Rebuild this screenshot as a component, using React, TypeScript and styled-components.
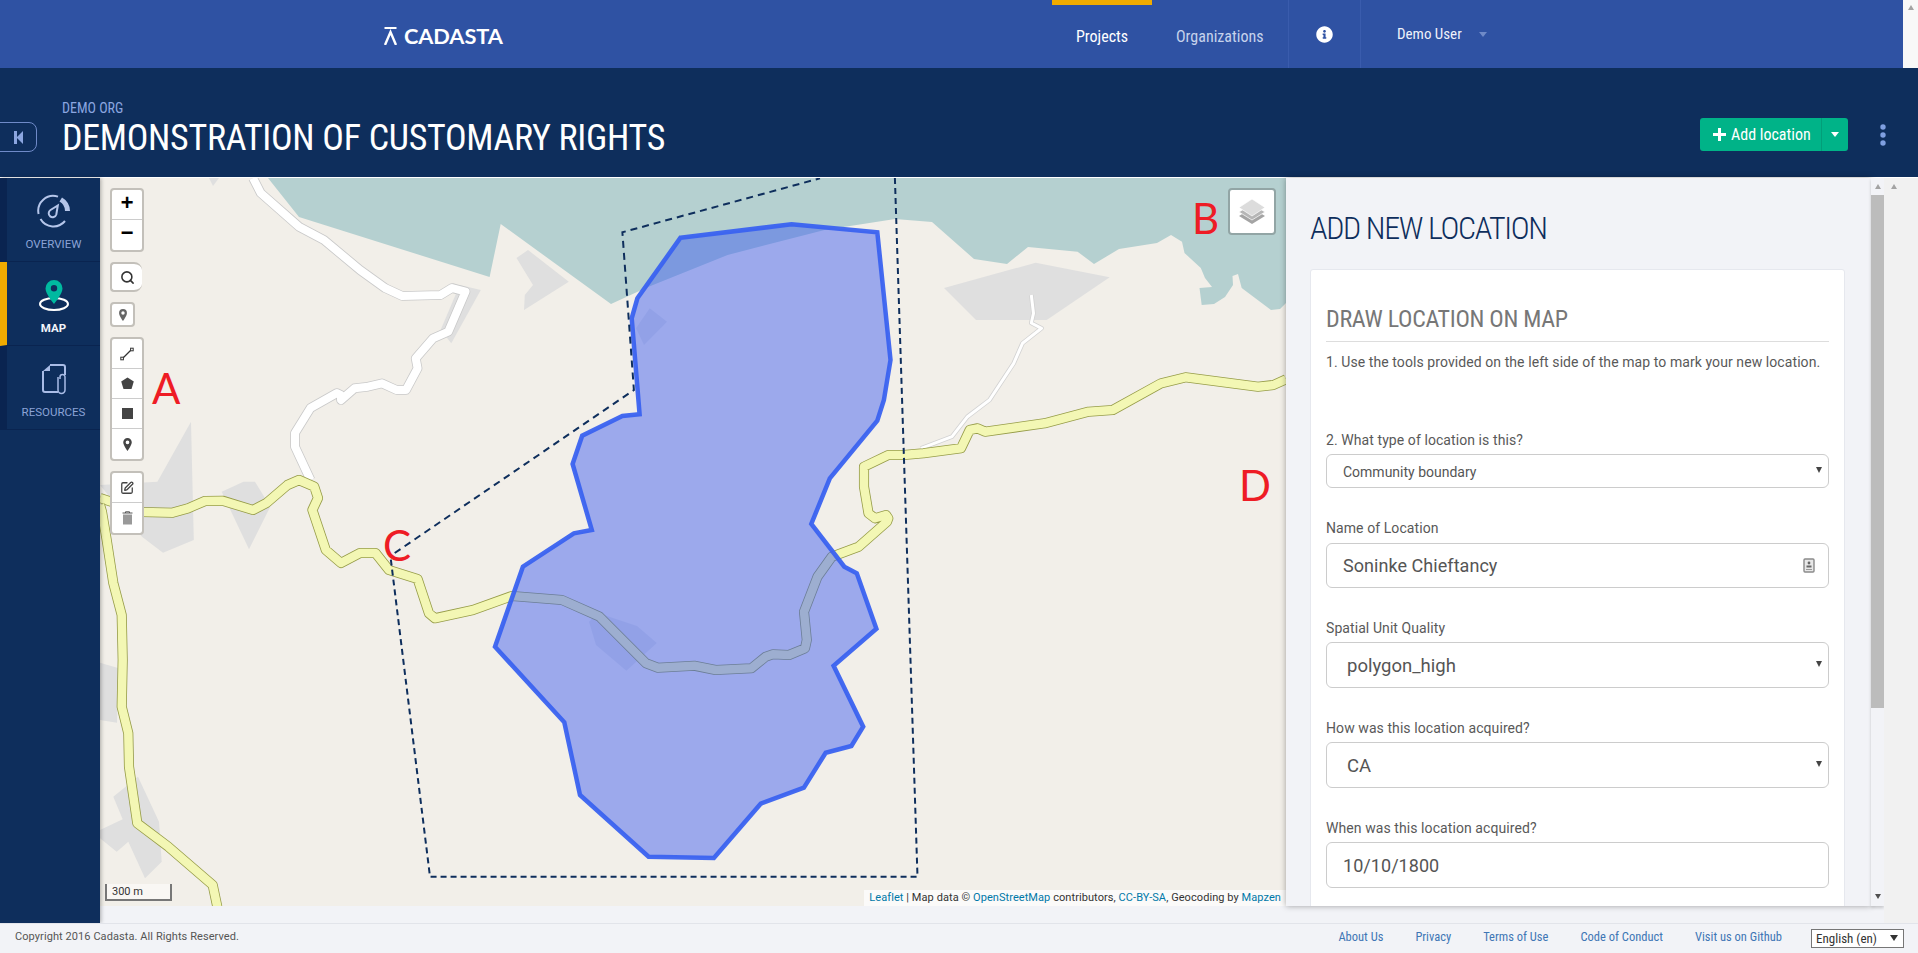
import React from 'react';
import styled, { createGlobalStyle } from 'styled-components';
import { FaInfoCircle } from 'react-icons/fa';
import { Search, SquarePen } from 'lucide-react';

const NAVY = '#0e2e5c';
const BLUE = '#2f52a3';

const Global = createGlobalStyle`
  html, body { margin: 0; padding: 0; height: 100%; overflow: hidden; background: #fff; }
  body { font-family: Roboto, "Liberation Sans", sans-serif; }
  * { box-sizing: border-box; }
`;

const Page = styled.div`
  width: 1918px; height: 953px; display: flex; flex-direction: column; overflow: hidden; background: #f2f3f7;
`;

const TopBar = styled.header`
  height: 68px; flex: none; margin-right: 15px; background: ${BLUE}; display: flex; padding-left: 384px;
  position: relative;
`;
const WindowArrow = styled.i<{ $down?: boolean }>`
  width: 0; height: 0; display: block; border-left: 3.5px solid transparent; border-right: 3.5px solid transparent;
  ${p => (p.$down ? 'border-top: 5px solid #505050;' : 'border-bottom: 5px solid #a3a3a3;')}
`;
const WindowScroll = styled.div`
  position: absolute; right: -15px; top: 0; width: 15px; height: 68px; background: #f8f8f8; display: flex; justify-content: center; padding-top: 5px;
`;
const Logo = styled.div`
  width: 668px; display: flex; align-items: center; gap: 7px; color: #fff; font: 700 21.8px Lato, sans-serif; letter-spacing: -0.1px; height: 71px;
`;
const NavItem = styled.a<{ $active?: boolean; $w: number }>`
  width: ${p => p.$w}px; padding: 0 0 0 24px; line-height: 74px; height: 68px; font-size: 16px; font-stretch: 75%;
  color: ${p => (p.$active ? '#fff' : '#c6d2ec')}; ${p => p.$active && 'box-shadow: inset 0 5px 0 #f0ab00;'}
`;
const InfoCell = styled.div`
  width: 73px; display: flex; align-items: center; justify-content: center; color: #fff; font-size: 17px;
  border-left: 1px solid #3a5cad; border-right: 1px solid #3a5cad;
`;
const UserCell = styled.div`
  padding: 26px 0 0 36px; display: flex; align-items: flex-start; gap: 17px; color: #eef1fa; font-size: 15px; font-stretch: 75%; line-height: 16px;
`;
const Caret = styled.i<{ $color: string }>`
  width: 0; height: 0; display: block; border-left: 4px solid transparent; border-right: 4px solid transparent;
  border-top: 5px solid ${p => p.$color};
`;
const UserCaret = styled(Caret)`
  margin-top: 6px;
`;

const SubHeader = styled.div`
  height: 110px; flex: none; background: ${NAVY}; border-bottom: 1px solid #fff; display: flex; position: relative;
`;
const BackButton = styled.div`
  width: 38px; height: 30px; margin: 54px 0 0 -1px; border: 1px solid #6f8ac8; border-radius: 0 8px 8px 0; display: flex; align-items: center; justify-content: center;
`;
const TitleBlock = styled.div`
  margin-left: 25px; padding-top: 32px;
`;
const Org = styled.div`
  color: #8ba6e0; font-size: 14px; line-height: 16px; font-stretch: 75%;
`;
const Title = styled.h1`
  margin: 2px 0 0; color: #fff; font-size: 36px; line-height: 40px; font-weight: 400; font-stretch: 75%; letter-spacing: -0.3px; white-space: nowrap;
`;
const Actions = styled.div`
  margin: 50px 0 0 auto; display: flex; align-items: flex-start;
`;
const AddButton = styled.div`
  display: flex; height: 33px; width: 148px; background: #00b388; border-radius: 3px; color: #fff; font-size: 16px; font-stretch: 75%;
`;
const AddMain = styled.div`
  width: 122px; display: flex; align-items: center; gap: 5px; padding-left: 13px; border-right: 1px solid #029e79;
`;
const AddCaret = styled.div`
  flex: 1; display: flex; align-items: center; justify-content: center;
`;
const Kebab = styled.div`
  width: 70px; height: 33px; display: flex; align-items: center; padding-left: 32px;
`;

const Body = styled.div`
  height: 745px; flex: none; display: flex;
`;
const Sidebar = styled.nav`
  width: 100px; flex: none; background: ${NAVY}; display: flex; flex-direction: column; position: relative; z-index: 3; box-shadow: 1px 0 4px rgba(0,0,0,.3);
`;
const SideItem = styled.div<{ $active?: boolean }>`
  height: 84px; border-left: 7px solid ${p => (p.$active ? '#f0ab00' : '#0a2450')}; border-bottom: 1px solid #0a2450;
  display: flex; flex-direction: column; align-items: center; padding-top: 16px;
  font-size: 11.500px; line-height: 14px; color: ${p => (p.$active ? '#f2f5fb' : '#8ba3d6')}; font-weight: ${p => (p.$active ? 700 : 400)};
`;
const SideIcon = styled.svg`
  width: 40px; height: 36px; margin-bottom: 7px;
`;

const Main = styled.div`
  flex: 1; display: flex; min-width: 0; height: 728px;
`;
const MapArea = styled.div`
  width: 1186px; flex: none; position: relative; background: #f2efe9; overflow: hidden;
`;
const MapSvg = styled.svg`
  position: absolute; inset: 0; width: 1186px; height: 728px; display: block;
`;
const Controls = styled.div`
  position: absolute; left: 10px; top: 10px; display: flex; flex-direction: column; align-items: flex-start; gap: 10px; z-index: 2;
`;
const ControlBox = styled.div<{ $w?: number }>`
  width: ${p => p.$w ?? 34}px; border: 2px solid #c3c0ba; border-radius: 4px; background: #fff; display: flex; flex-direction: column; background-clip: padding-box;
`;
const ControlBtn = styled.div<{ $h?: number; $last?: boolean }>`
  height: ${p => (p.$h ?? 30)}px; display: flex; align-items: center; justify-content: center; color: #000;
  border-bottom: ${p => (p.$last ? 'none' : '1px solid #ccc')};
  font: 700 22px/30px "Liberation Mono", monospace;
`;
const SearchBox = styled(ControlBox)`
  border-right: none; border-radius: 4px 8px 8px 4px; width: 32px;
`;
const LayersBox = styled.div`
  position: absolute; right: 10px; top: 10px; width: 48px; height: 47px; border: 2px solid #92a5a5; border-radius: 4px; background: #fff;
  display: flex; align-items: center; justify-content: center; z-index: 2;
`;
const Letter = styled.span<{ $x: number; $y: number }>`
  position: absolute; left: ${p => p.$x}px; top: ${p => p.$y}px; color: #ee1c25; font: 400 42px/42px Lato, sans-serif; z-index: 1;
`;
const Scale = styled.div`
  position: absolute; left: 5px; bottom: 5px; width: 67px; height: 17px; border: 2px solid #777; border-top: none; background: rgba(255,255,255,.5);
  font-size: 11px; line-height: 15px; padding-left: 5px; color: #333; z-index: 1;
`;
const Attribution = styled.div`
  position: absolute; right: 0; bottom: 0; height: 16px; background: rgba(255,255,255,.7); padding: 0 5px; font-size: 11px; letter-spacing: .07px; line-height: 16px; color: #333; white-space: nowrap;
  a { color: #0078a8; }
`;

const Panel = styled.aside`
  width: 585px; flex: none; height: 728px; overflow: hidden; padding: 30px 26px 0 24px; background: #f2f3f7; box-shadow: 0 0 6px rgba(0,0,0,.35); position: relative; z-index: 2;
`;
const PanelTitle = styled.h2`
  margin: 0 0 21px; font-size: 32px; line-height: 40px; font-weight: 300; color: ${NAVY}; font-stretch: 75%; letter-spacing: -1.35px;
`;
const Card = styled.div`
  background: #fff; border: 1px solid #e6e8ee; border-radius: 3px; padding: 34px 15px 0; height: 700px;
`;
const CardTitle = styled.h3`
  margin: 0; font-size: 24px; line-height: 31px; padding-bottom: 6px; font-weight: 400; color: #777; border-bottom: 1px solid #ddd; font-stretch: 75%; letter-spacing: -0.3px;
`;
const Para = styled.p`
  margin: 10px 0 0; font-size: 14px; line-height: 20px; color: #595959; letter-spacing: .08px;
`;
const Field = styled.div<{ $top?: number }>`
  margin-top: ${p => p.$top ?? 30}px; position: relative;
`;
const Label = styled.label<{ $gap?: number }>`
  display: block; font-size: 14px; line-height: 20px; height: 20px; margin-bottom: ${p => p.$gap ?? 4}px; color: #595959; letter-spacing: .08px;
`;
const controlCss = `
  display: block; width: 100%; border: 1px solid #ccc; border-radius: 6px; background: #fff; color: #555; outline: none; font-family: Roboto, sans-serif; appearance: none;
`;
const Select = styled.select<{ $h: number; $size: number; $pad: number }>`
  ${controlCss}
  height: ${p => p.$h}px; font-size: ${p => p.$size}px; padding-left: ${p => p.$pad}px; padding-top: 1px;
`;
const Input = styled.input<{ $h: number }>`
  ${controlCss}
  height: ${p => p.$h}px; font-size: 18px; padding-left: 16px; letter-spacing: .05px;
`;
const SelectArrow = styled.i`
  display: block; width: 0; height: 0; border-left: 3px solid transparent; border-right: 3px solid transparent; border-top: 6px solid #444; margin-top: -2px;
`;
const ArrowSlot = styled.div<{ $h: number }>`
  position: absolute; right: 0; bottom: 0; width: 20px; height: ${p => p.$h}px; display: flex; align-items: center; justify-content: center; pointer-events: none;
`;
const ContactIcon = styled.svg`
  position: absolute; right: 14px; bottom: 15px; width: 12px; height: 15px;
`;

const ScrollCol = styled.div`
  width: 13px; flex: none; height: 728px; display: flex; flex-direction: column; align-items: center; position: relative; z-index: 3; padding-top: 6px; background: #f2f3f7; box-shadow: 0 2px 3px rgba(0,0,0,.18);
`;
const Thumb = styled.div`
  width: 13px; height: 513px; margin-top: 6px; background: #bcbcbc; flex: none;
`;
const ArrowDownSlot = styled.div`
  margin-top: auto; padding-bottom: 7px;
`;
const OuterCol = styled.div`
  flex: 1; height: 745px; background: #f1f1f1; padding: 6px 0 0 7px; position: relative; z-index: 3;
`;

const Footer = styled.footer`
  height: 30px; flex: none; border-top: 1px solid #e2e4ea; background: #f2f3f7; display: flex; align-items: center; padding: 0 0 4px 15px; font-size: 11px; letter-spacing: .08px; color: #555; position: relative; z-index: 4;
`;
const FooterLinks = styled.div`
  margin-left: auto; display: flex; gap: 32px; color: #3f76b5; font-size: 12.500px; font-stretch: 75%; letter-spacing: 0;
`;
const LangWrap = styled.div`
  position: relative; margin: 4px 14px 0 29px;
`;
const LangSelect = styled.select`
  width: 93px; height: 19px; border: 1px solid #767676; border-radius: 0; background: #fff; appearance: none; font: 13px Roboto, sans-serif; font-stretch: 75%; padding-left: 4px; color: #333; display: block;
`;
const LangArrow = styled.i`
  position: absolute; right: 6px; top: 6px; width: 0; height: 0; border-left: 4px solid transparent; border-right: 4px solid transparent; border-top: 6px solid #333;
`;

const pts = (a: number[][]) => a.map(p => p.join(',')).join(' ');

const WATER = [[268,178],[299,217],[489.6,277],[500.7,224],[611,304],[648,287],[727.6,255],[824.5,230],[895,219],[932,222],[974,259],[1007,264],[1028,247],[1077.6,251.7],[1094,264],[1119,249],[1157,243],[1171,235],[1182,241.7],[1184.5,253],[1200.8,268],[1205,278],[1212,287],[1199.5,288],[1201.7,305],[1214,304],[1225,297],[1233,285],[1232.5,276],[1238,274],[1241.7,288],[1271,310],[1280,309],[1286,303],[1286,178]];
const BUILDINGS = [
  [[209,178],[213,186],[219,178]],
  [[528,250],[568.8,281.7],[524,310],[524.8,295],[533,285],[516.5,258]],
  [[459.7,285],[480.8,290],[451.3,343.3],[440.6,330]],
  [[191,421.7],[193.8,540],[163,552.7],[142,536.7],[100,485],[157.4,481.7]],
  [[243.5,481.7],[255,481.7],[270.3,506.7],[249,549.3],[221.7,491.7]],
  [[649.7,308.3],[667,321.7],[644,345],[636,328.3]],
  [[589,621.7],[598,613],[637,626],[656.8,643],[626.4,670.7],[596,645]],
  [[944,288],[1035.7,262.7],[1109.7,277.3],[1046.7,320],[976,320]],
  [[100,662.7],[118,668],[117,722.7],[100,720]],
  [[138,776.7],[159,821.7],[161.7,861.7],[145,878.3],[128.3,841.7],[116.7,851.7],[100,838.3],[100,830],[122.7,819.3],[113.3,796.7]],
];
const ROAD_MAIN = [[100,498],[142,512],[172.7,512.7],[188,508.3],[205,501],[222.5,500.7],[253,510],[266.5,503],[287.5,485],[299,480],[314.3,486.7],[318,498],[312.4,510],[325.8,550],[341,563],[360,553],[375.5,553],[389,570],[417.6,579],[429,613.3],[434.9,618.3],[473,610],[512,596],[562,600],[599.6,616.7],[646,663.3],[657.9,667.7],[694.3,665.7],[715.7,670],[751.4,668.3],[765.7,656.7],[772.9,654.3],[789,655],[805,648.3],[806.8,640],[804,611.7],[817.5,576.7],[831.8,556.7],[858.6,546.7],[887,521.7],[888.3,518.3],[886,515],[875,518.3],[868.5,513.3],[864,486.7],[864,466.7],[888.3,455],[903.7,455],[923.5,453.3],[961,448.3],[969.7,430],[977.6,428.3],[985,431.7],[1044.5,423.3],[1088.6,411.7],[1112.8,410],[1161,383.3],[1185.4,377.3],[1258,386.7],[1273.4,385],[1286,379.3]];
const ROAD_LEFT = [[100,505],[102,512],[106.7,540],[113.3,583],[121.7,615],[122.7,660],[121.7,706.7],[128.3,733.3],[129,766.7],[137.3,823.3],[168.3,846.7],[212.7,885],[217.3,906.7]];
const ROAD_WHITE = [[253,178],[260.7,193],[299,226.7],[324,240],[360,270],[385,288],[402.3,296],[440.6,295],[452,288],[465.5,291.7],[448.3,331.7],[433,338.3],[415.7,358.3],[417.6,368.3],[406,390],[396.6,390],[382,383.3],[368,386.7],[354.5,388.3],[341,400],[341,395],[337,393],[310.5,408],[295,433],[295,446.7],[310.5,480]];
const ROAD_THIN = [[1031.3,295],[1033.5,313.3],[1031.3,323],[1041.5,328.3],[1022.5,343.3],[1013.7,363.3],[989.5,400],[967.5,416.7],[952,436.7],[921,448.3]];
const POLYGON = [[680.5,237.7],[791.5,224.3],[877.3,232.3],[890.5,360],[883.9,400],[877.3,420.7],[829.8,478.3],[811.3,524],[844.3,566.7],[856.8,573.3],[876.4,628.7],[833.6,665.7],[863.2,726.7],[851.4,746],[825.7,752.7],[803.9,787.7],[760.7,803.7],[713.9,858],[648.6,856.7],[580,795],[564.3,722.3],[495,646.7],[522.9,566.7],[573.9,533.3],[591.8,530],[572.6,464],[582.2,435.7],[622.4,416],[639.6,414.3],[631.7,318.3],[637.4,298.3]];
const DASH_A = [[394.7,553],[633.9,390],[622.4,232.3],[820,178.3]];
const DASH_B = [[894.9,178],[917.5,876.7],[430,876.7],[390.7,558.3]];

const Road = ({ p, outer, inner, w }: { p: number[][]; outer: string; inner: string; w: number }) => (
  <>
    <polyline points={pts(p)} fill="none" stroke={outer} strokeWidth={w + 1.6} strokeLinejoin="round" />
    <polyline points={pts(p)} fill="none" stroke={inner} strokeWidth={w} strokeLinejoin="round" />
  </>
);

const MapDrawing = () => (
  <MapSvg viewBox="100 178 1186 728">
    <polygon points={pts(WATER)} fill="#b5d0d0" />
    {BUILDINGS.map((b, i) => <polygon key={i} points={pts(b)} fill="#dfdfdf" />)}
    <Road p={ROAD_WHITE} outer="#c9c9c9" inner="#fff" w={8} />
    <Road p={ROAD_THIN} outer="#d2d2d2" inner="#fff" w={3} />
    <Road p={ROAD_MAIN} outer="#969c48" inner="#f3f7b4" w={8.500} />
    <Road p={ROAD_LEFT} outer="#969c48" inner="#f3f7b4" w={8.500} />
    <polygon points={pts(POLYGON)} fill="#3b5cf0" fillOpacity=".47" stroke="#3a62f0" strokeWidth="4.500" strokeOpacity=".95" />
    <polyline points={pts(DASH_A)} fill="none" stroke={NAVY} strokeWidth="2" strokeDasharray="7 5" />
    <polyline points={pts(DASH_B)} fill="none" stroke={NAVY} strokeWidth="2" strokeDasharray="6 4" />
  </MapSvg>
);

const Pin = ({ size, color }: { size: number; color: string }) => (
  <svg width={size} height={size} viewBox="0 0 12 14">
    <path fillRule="evenodd" d="M6 0a4.6 4.6 0 0 0-4.6 4.6C1.400 7.800 6 14 6 14s4.600-6.200 4.600-9.400A4.600 4.600 0 0 0 6 0zm0 6.600a2 2 0 1 1 0-4 2 2 0 0 1 0 4z" fill={color} />
  </svg>
);

export default function App() {
  return (
    <Page>
      <Global />
      <TopBar>
        <Logo>
          <svg width="13" height="18" viewBox="0 0 13 18">
            <rect x="0.500" y="0" width="12" height="2" fill="#fff" />
            <path d="M1 18 L6.500 5 L12 18" stroke="#fff" strokeWidth="2.400" fill="none" />
          </svg>
          CADASTA
        </Logo>
        <NavItem $active $w={100}>Projects</NavItem>
        <NavItem $w={136}>Organizations</NavItem>
        <InfoCell><FaInfoCircle /></InfoCell>
        <UserCell>Demo User <UserCaret $color="#6f8ac8" /></UserCell>
        <WindowScroll><WindowArrow /></WindowScroll>
      </TopBar>
      <SubHeader>
        <BackButton>
          <svg width="9" height="13" viewBox="0 0 9 13"><rect width="3" height="13" fill="#8ba6e0" /><path d="M9 0v13L2.500 6.500z" fill="#8ba6e0" /></svg>
        </BackButton>
        <TitleBlock>
          <Org>DEMO ORG</Org>
          <Title>DEMONSTRATION OF CUSTOMARY RIGHTS</Title>
        </TitleBlock>
        <Actions>
          <AddButton>
            <AddMain>
              <svg width="13" height="13" viewBox="0 0 13 13"><path d="M5 0h3v5h5v3H8v5H5V8H0V5h5z" fill="#fff" /></svg>
              Add location
            </AddMain>
            <AddCaret><Caret $color="#fff" /></AddCaret>
          </AddButton>
          <Kebab>
            <svg width="6" height="22" viewBox="0 0 6 22">
              <circle cx="3" cy="3" r="2.700" fill="#7f9fe0" /><circle cx="3" cy="11" r="2.700" fill="#7f9fe0" /><circle cx="3" cy="19" r="2.700" fill="#7f9fe0" />
            </svg>
          </Kebab>
        </Actions>
      </SubHeader>
      <Body>
        <Sidebar>
          <SideItem>
            <SideIcon viewBox="0 0 40 36">
              <path d="M4.600 20 A15 15 0 0 1 24 2.600" fill="none" stroke="#b5c6ea" strokeWidth="2" />
              <path d="M6.500 25 A15 15 0 0 0 31 27" fill="none" stroke="#b5c6ea" strokeWidth="2" />
              <path d="M28 3.500 A16 16 0 0 1 36 17 L31 17 A11 11 0 0 0 25.500 7.500 Z" fill="#b5c6ea" />
              <path d="M23.800 11.500 L22.300 20.500 a3.900 3.900 0 1 1-5.800-4.500z" fill="none" stroke="#b5c6ea" strokeWidth="2" />
            </SideIcon>
            OVERVIEW
          </SideItem>
          <SideItem $active>
            <SideIcon viewBox="0 0 40 36">
              <ellipse cx="20" cy="26" rx="14" ry="6" fill="none" stroke="#fff" strokeWidth="2" />
              <path fillRule="evenodd" d="M20 2a8.500 8.500 0 0 0-8.500 8.500C11.500 16 20 26 20 26s8.500-10 8.500-15.500A8.500 8.500 0 0 0 20 2zm0 11.500a3.200 3.200 0 1 1 0-6.400 3.200 3.200 0 0 1 0 6.400z" fill="#00b9a0" />
            </SideIcon>
            MAP
          </SideItem>
          <SideItem>
            <SideIcon viewBox="0 0 40 36">
              <path d="M16 3h13a2 2 0 0 1 2 2v8M9 9v19a2 2 0 0 0 2 2h13" fill="none" stroke="#a9bce6" strokeWidth="2" />
              <path d="M9 9l7-6v6z" fill="#a9bce6" />
              <path d="M26 17v-2a2.500 2.500 0 0 1 5 0v13a3.500 3.500 0 0 1-7 0V15" fill="none" stroke="#a9bce6" strokeWidth="1.500" />
            </SideIcon>
            RESOURCES
          </SideItem>
        </Sidebar>
        <Main>
          <MapArea>
            <MapDrawing />
            <Controls>
              <ControlBox>
                <ControlBtn>+</ControlBtn>
                <ControlBtn $last>−</ControlBtn>
              </ControlBox>
              <SearchBox>
                <ControlBtn $h={26} $last><Search size={15} color="#333" strokeWidth={2.500} /></ControlBtn>
              </SearchBox>
              <ControlBox $w={25}>
                <ControlBtn $h={21} $last><Pin size={12} color="#666" /></ControlBtn>
              </ControlBox>
              <ControlBox>
                <ControlBtn>
                  <svg width="14" height="14" viewBox="0 0 14 14"><path d="M2.500 11.500 L11.500 2.500" stroke="#333" strokeWidth="1.200" /><rect x="0.800" y="10.200" width="2.600" height="2.600" fill="#fff" stroke="#333" /><rect x="10.600" y="1.200" width="2.600" height="2.600" fill="#fff" stroke="#333" /></svg>
                </ControlBtn>
                <ControlBtn>
                  <svg width="13" height="13" viewBox="0 0 13 13"><path d="M6.500 0.500 L12.800 4.500 L10.500 12 L2.500 12 L0.200 4.500Z" fill="#444" /></svg>
                </ControlBtn>
                <ControlBtn>
                  <svg width="11" height="11" viewBox="0 0 11 11"><rect width="11" height="11" fill="#444" /></svg>
                </ControlBtn>
                <ControlBtn $last><Pin size={13} color="#444" /></ControlBtn>
              </ControlBox>
              <ControlBox>
                <ControlBtn><SquarePen size={14} color="#444" strokeWidth={2.200} /></ControlBtn>
                <ControlBtn $last>
                  <svg width="11" height="14" viewBox="0 0 11 14"><path d="M0.500 2h10M3.500 2V0.800h4V2" stroke="#555" fill="none" /><rect x="1" y="3.500" width="9" height="10" fill="#999" /></svg>
                </ControlBtn>
              </ControlBox>
            </Controls>
            <LayersBox>
              <svg width="26" height="25" viewBox="0 0 26 25">
                <path d="M13 9 L26 17 L13 25 L0 17Z" fill="#a4a4a4" />
                <path d="M13 5 L26 13 L13 21 L0 13Z" fill="#b6b6b6" stroke="#fff" strokeWidth=".7" />
                <path d="M13 0 L26 8.500 L13 17 L0 8.500Z" fill="#dcdcdc" stroke="#fff" strokeWidth=".7" />
              </svg>
            </LayersBox>
            <Letter $x={52} $y={189}>A</Letter>
            <Letter $x={1092} $y={19}>B</Letter>
            <Letter $x={283} $y={346}>C</Letter>
            <Letter $x={1139} $y={286}>D</Letter>
            <Scale>300 m</Scale>
            <Attribution><a>Leaflet</a> | Map data © <a>OpenStreetMap</a> contributors, <a>CC-BY-SA</a>, Geocoding by <a>Mapzen</a></Attribution>
          </MapArea>
          <Panel>
            <PanelTitle>ADD NEW LOCATION</PanelTitle>
            <Card>
              <CardTitle>DRAW LOCATION ON MAP</CardTitle>
              <Para>1. Use the tools provided on the left side of the map to mark your new location.</Para>
              <Field $top={58}>
                <Label>2. What type of location is this?</Label>
                <Select $h={34} $size={14} $pad={16}><option>Community boundary</option></Select>
                <ArrowSlot $h={34}><SelectArrow /></ArrowSlot>
              </Field>
              <Field>
                <Label $gap={5}>Name of Location</Label>
                <Input $h={45} defaultValue="Soninke Chieftancy" readOnly />
                <ContactIcon viewBox="0 0 12 15">
                  <rect x="1" y="1" width="10" height="13" rx="1" fill="#e8e8e8" stroke="#8a8a8a" strokeWidth="1.400" />
                  <circle cx="6" cy="5" r="1.400" fill="#666" /><rect x="3.500" y="7.500" width="5" height="2" fill="#666" /><rect x="3" y="11" width="6" height="1" fill="#999" />
                </ContactIcon>
              </Field>
              <Field>
                <Label>Spatial Unit Quality</Label>
                <Select $h={46} $size={18.500} $pad={20}><option>polygon_high</option></Select>
                <ArrowSlot $h={46}><SelectArrow /></ArrowSlot>
              </Field>
              <Field>
                <Label>How was this location acquired?</Label>
                <Select $h={46} $size={18.500} $pad={20}><option>CA</option></Select>
                <ArrowSlot $h={46}><SelectArrow /></ArrowSlot>
              </Field>
              <Field>
                <Label>When was this location acquired?</Label>
                <Input $h={46} defaultValue="10/10/1800" readOnly />
              </Field>
            </Card>
          </Panel>
          <ScrollCol>
            <WindowArrow />
            <Thumb />
            <ArrowDownSlot><WindowArrow $down /></ArrowDownSlot>
          </ScrollCol>
          <OuterCol><WindowArrow /></OuterCol>
        </Main>
      </Body>
      <Footer>
        Copyright 2016 Cadasta. All Rights Reserved.
        <FooterLinks>
          <span>About Us</span><span>Privacy</span><span>Terms of Use</span><span>Code of Conduct</span><span>Visit us on Github</span>
        </FooterLinks>
        <LangWrap>
          <LangSelect><option>English (en)</option></LangSelect>
          <LangArrow />
        </LangWrap>
      </Footer>
    </Page>
  );
}
